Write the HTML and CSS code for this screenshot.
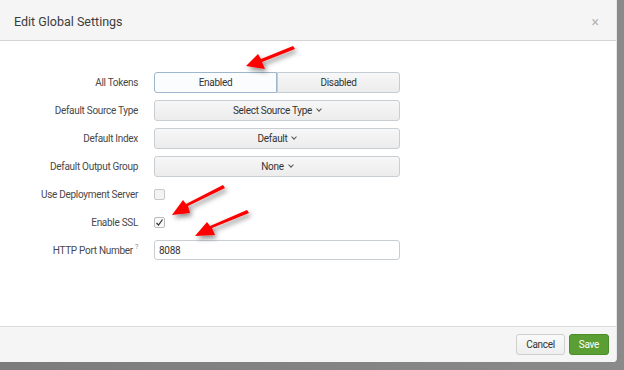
FILE: index.html
```html
<!DOCTYPE html>
<html>
<head>
<meta charset="utf-8">
<link rel="stylesheet" href="styles.css">
</head>
<body>
<div class="backdrop">
  <div class="modal">
    <div class="modal-header">
      <h1 class="title">Edit Global Settings</h1>
      <span class="close">×</span>
    </div>
    <div class="modal-body">
      <div class="row">
        <label class="label">All Tokens</label>
        <div class="control seg">
          <button class="seg-btn active">Enabled</button>
          <button class="seg-btn">Disabled</button>
        </div>
      </div>
      <div class="row">
        <label class="label">Default Source Type</label>
        <button class="control dropdown">Select Source Type <span class="caret"></span></button>
      </div>
      <div class="row">
        <label class="label">Default Index</label>
        <button class="control dropdown">Default <span class="caret"></span></button>
      </div>
      <div class="row">
        <label class="label">Default Output Group</label>
        <button class="control dropdown">None <span class="caret"></span></button>
      </div>
      <div class="row">
        <label class="label">Use Deployment Server</label>
        <span class="checkbox"></span>
      </div>
      <div class="row">
        <label class="label">Enable SSL</label>
        <span class="checkbox checked">
          <svg width="9" height="9" viewBox="0 0 9 9"><path d="M1.5 5 L3.5 7 L7.5 1.5" fill="none" stroke="#333" stroke-width="1.2"/></svg>
        </span>
      </div>
      <div class="row">
        <label class="label">HTTP Port Number <sup class="help">?</sup></label>
        <div class="control input">8088</div>
      </div>
    </div>
    <div class="modal-footer">
      <button class="btn">Cancel</button>
      <button class="btn primary">Save</button>
    </div>
  </div>
  <svg class="arrows" width="624" height="370" viewBox="0 0 624 370">
    <defs>
      <filter id="sh" x="-20%" y="-50%" width="140%" height="200%">
        <feDropShadow dx="2" dy="3" stdDeviation="2.5" flood-color="#000" flood-opacity="0.45"/>
      </filter>
    </defs>
    <g fill="#f00" filter="url(#sh)">
      <polygon points="293,46 295,49 262,62 265,69 246,66 258,54 261,59"/>
      <polygon points="223,185 225,188 188,206 190,213 172,215 183,200 186,204"/>
      <polygon points="247,210 249,213 212,228 215,235 195,236 207,222 210,226"/>
    </g>
  </svg>
</div>
</body>
</html>
```

FILE: styles.css
```css
* { box-sizing: border-box; }
html, body { margin: 0; padding: 0; }
body {
  font-family: Roboto, "Liberation Sans", Arial, sans-serif;
  color: #333;
  background: #7c7c7c;
  width: 624px;
  height: 370px;
  overflow: hidden;
}
.backdrop {
  position: relative;
  width: 624px;
  height: 370px;
  background: linear-gradient(to right, #7c7c7c, #8a8a8a);
}
.modal {
  width: 617px;
  height: 362px;
  background: #fff;
  border-right: 1px solid #e6e6e6;
  border-radius: 0 0 4px 0;
  display: flex;
  flex-direction: column;
  overflow: hidden;
}
.modal-header {
  height: 41px;
  background: #f5f5f5;
  border-bottom: 1px solid #d4d4d4;
  display: flex;
  align-items: center;
  justify-content: space-between;
  padding: 3px 17px 0 14px;
  flex: none;
}
.title {
  margin: 0;
  font-size: 12.5px;
  font-weight: normal;
  color: #3c3c3c;
}
.close {
  font-size: 14px;
  color: #b5b5b5;
}
.modal-body {
  flex: 1;
  padding-top: 30px;
  display: flex;
  flex-direction: column;
  gap: 6px;
}
.row {
  display: flex;
  align-items: center;
  height: 22px;
  gap: 16px;
}
.label {
  width: 138px;
  text-align: right;
  font-size: 10px;
  letter-spacing: -0.3px;
  color: #484848;
}
.help {
  font-size: 7px;
  color: #888;
  vertical-align: top;
  position: relative;
  top: -2px;
}
.control {
  width: 246px;
  height: 21px;
  font-family: inherit;
  font-size: 10px;
  letter-spacing: -0.3px;
  color: #333;
}
.seg {
  display: flex;
}
.seg-btn {
  flex: 1;
  height: 21px;
  font-family: inherit;
  font-size: 10px;
  letter-spacing: -0.3px;
  color: #333;
  border: 1px solid #c3cbd4;
  background: linear-gradient(#f7f7f7, #ececec);
  padding: 0;
  margin: 0;
}
.seg-btn:first-child {
  border-radius: 3px 0 0 3px;
  border-right: none;
}
.seg-btn:last-child {
  border-radius: 0 3px 3px 0;
}
.seg-btn.active {
  background: #fbfcfd;
  border-color: #9fb7cc;
  border-right: 1px solid #9fb7cc;
}
.dropdown {
  border: 1px solid #c9ced3;
  border-radius: 3px;
  background: linear-gradient(#f7f7f7, #ececec);
  padding: 0;
  display: flex;
  align-items: center;
  justify-content: center;
  gap: 3px;
}
.caret {
  display: inline-block;
  width: 4px;
  height: 4px;
  border-right: 1px solid #555;
  border-bottom: 1px solid #555;
  transform: rotate(45deg);
  margin: -3px 0 0 2px;
}
.checkbox {
  width: 11px;
  height: 11px;
  border: 1px solid #c8c8c8;
  border-radius: 2px;
  background: #f3f3f3;
  display: flex;
  align-items: center;
  justify-content: center;
}
.checkbox.checked {
  background: #f8f8f8;
  border-color: #bbb;
}
.input {
  height: 20px;
  border: 1px solid #c9ced3;
  border-radius: 3px;
  background: #fff;
  padding: 0 0 0 4px;
  display: flex;
  align-items: center;
}
.modal-footer {
  height: 36px;
  flex: none;
  background: #f5f5f5;
  border-top: 1px solid #dcdcdc;
  display: flex;
  justify-content: flex-end;
  align-items: center;
  gap: 4px;
  padding: 0 7px 0 0;
}
.btn {
  height: 21px;
  font-family: inherit;
  font-size: 10px;
  letter-spacing: -0.3px;
  padding: 0 9px;
  border-radius: 3px;
  border: 1px solid #cfcfcf;
  background: linear-gradient(#fafafa, #eeeeee);
  color: #333;
}
.btn.primary {
  background: #5a9e34;
  border-color: #4c8c2a;
  color: #fff;
  padding: 0 9px;
}
.arrows {
  position: absolute;
  left: 0;
  top: 0;
  pointer-events: none;
}
```
